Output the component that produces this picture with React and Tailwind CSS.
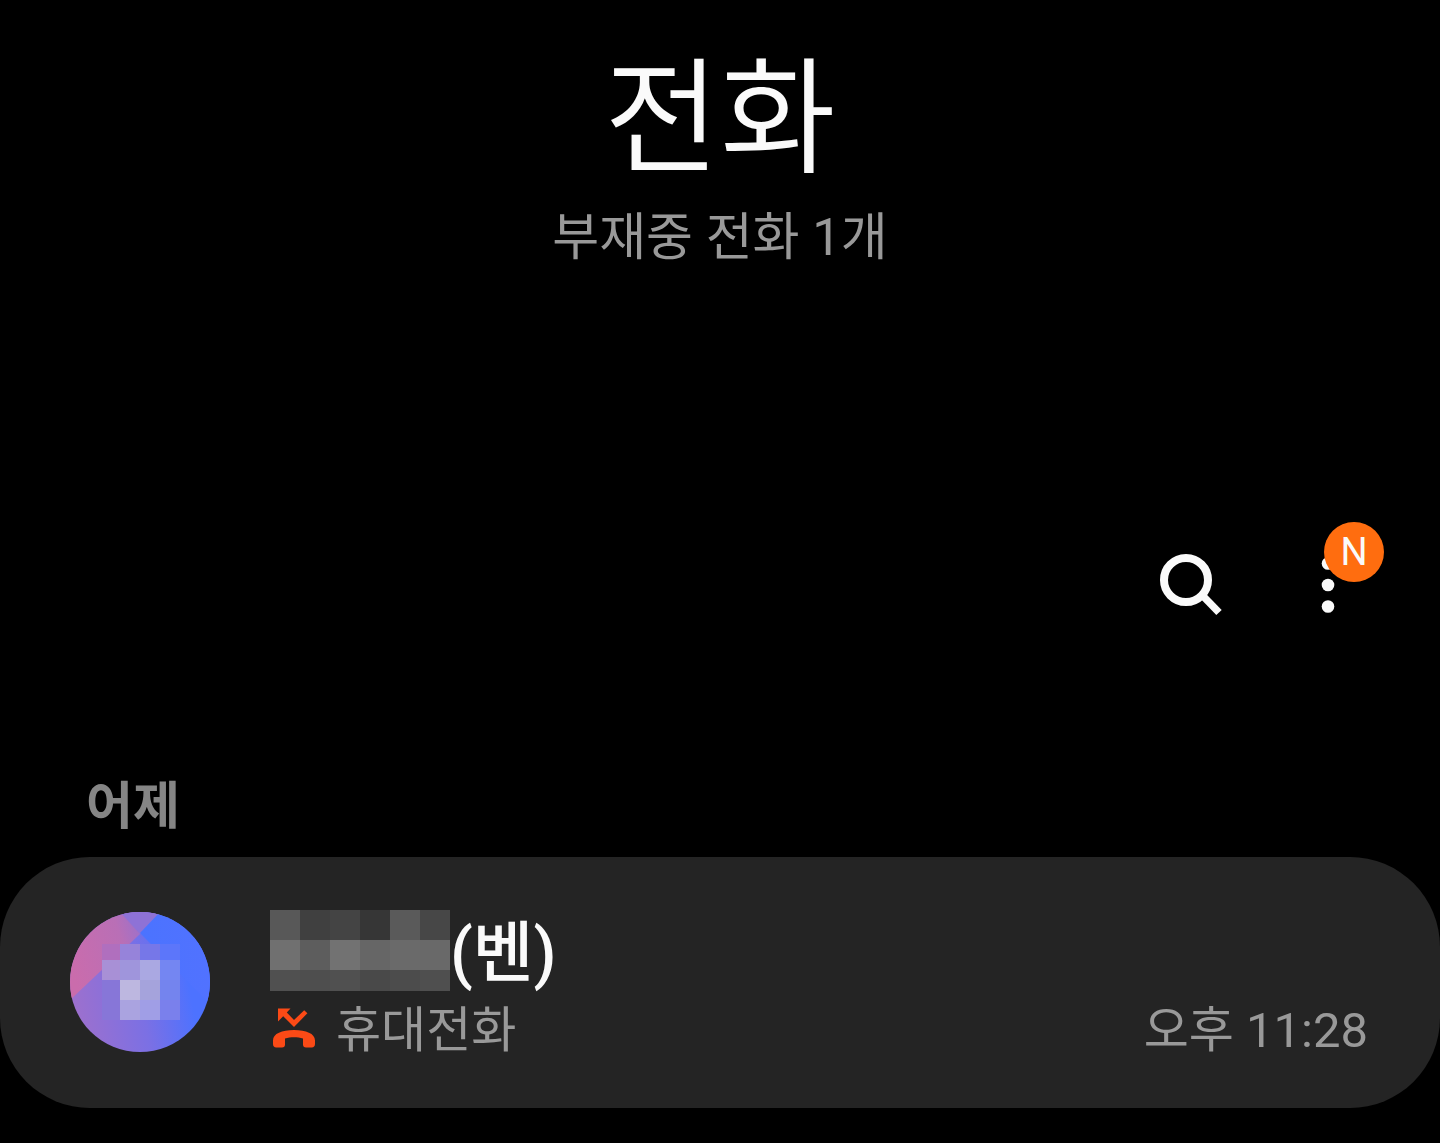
import { useState } from 'react'

const calls = [
  { id: 1, name: '(벤)', kind: '휴대전화', time: '오후 11:28' },
]

// Grey blocks that cover the private part of the name, 30px each
const maskRows = [
  ['#585858', '#404040', '#444444', '#363636', '#5a5a5a', '#474747'],
  ['#707070', '#5d5d5d', '#727272', '#666666', '#6a6a6a', '#696969'],
  ['#505050', '#4e4e4e', '#505050', '#494949', '#4c4c4c', '#4f4f4f'],
]

function NameMask() {
  return (
    <svg width="180" height="81" viewBox="0 0 180 81" className="shrink-0" shapeRendering="crispEdges" aria-hidden="true">
      {maskRows.map(function(row, y) {
        return row.map(function(fill, x) {
          return <rect key={x + '-' + y} x={x * 30} y={y * 30} width="30" height="30" fill={fill} />
        })
      })}
    </svg>
  )
}

function SearchIcon() {
  return (
    <svg width="64" height="64" viewBox="0 0 64 64" fill="none" stroke="#fafafa" aria-hidden="true">
      <circle cx="26" cy="28" r="22" strokeWidth="8" />
      <path d="M42 43L59 60.5" strokeWidth="7.5" />
    </svg>
  )
}

function MoreIcon() {
  return (
    <svg width="64" height="64" viewBox="0 0 64 64" fill="#fafafa" aria-hidden="true">
      <circle cx="32" cy="11.5" r="6.3" />
      <circle cx="32" cy="33" r="6.3" />
      <circle cx="32" cy="54.5" r="6.3" />
    </svg>
  )
}

function MissedIcon() {
  return (
    <svg width="48" height="48" viewBox="0 1 48 48" className="mt-1 shrink-0" aria-hidden="true">
      <path d="M8 6.5H20.5L16.8 10.5L24 18L34.2 8.2L37.4 11.3L24 25L13.2 14.2L8 19.5Z" fill="#fb4a16" />
      <path d="M3 42V38.5C3 31.5 12 28 24 28S45 31.5 45 38.5V42C45 44.2 43.8 45.4 41.8 45.4H36C34 45.4 33 44.4 33 42.4V36.6C27.5 34.8 20.5 34.8 15 36.6V42.4C15 44.4 14 45.4 12 45.4H6.2C4.2 45.4 3 44.2 3 42Z" fill="#fb4a16" />
    </svg>
  )
}

function Avatar() {
  return (
    <svg width="140" height="140" viewBox="0 0 140 140" className="mt-0.5 shrink-0 rounded-full" aria-hidden="true">
      <defs>
        <linearGradient id="base" x1="0" y1="0.7" x2="1" y2="0.5">
          <stop offset="0" stopColor="#9f70cc" />
          <stop offset="0.5" stopColor="#7b70e4" />
          <stop offset="0.85" stopColor="#4d72ff" />
        </linearGradient>
        <linearGradient id="pink" x1="0" y1="0.6" x2="1" y2="0.3">
          <stop offset="0" stopColor="#ca6cac" />
          <stop offset="0.6" stopColor="#b96fb6" />
          <stop offset="1" stopColor="#8a72d8" />
        </linearGradient>
        <linearGradient id="blue" x1="0" y1="0" x2="1" y2="0">
          <stop offset="0" stopColor="#4b73ff" />
          <stop offset="1" stopColor="#5172ff" />
        </linearGradient>
      </defs>
      <rect width="140" height="140" fill="url(#base)" />
      <path d="M0 0H90L70 22L0 88Z" fill="url(#pink)" />
      <path d="M50 0H92L70 22Z" fill="#8e72d6" />
      <path d="M70 21L90 0H140V92Z" fill="url(#blue)" />
      <g shapeRendering="crispEdges">
        <rect x="32" y="32" width="18" height="16" fill="#b06fbe" />
        <rect x="50" y="32" width="20" height="16" fill="#9683da" />
        <rect x="70" y="32" width="20" height="16" fill="#7677e8" />
        <rect x="90" y="32" width="20" height="16" fill="#5c76fa" />
        <rect x="32" y="48" width="18" height="20" fill="#a890d6" />
        <rect x="50" y="48" width="20" height="20" fill="#9f95dc" />
        <rect x="70" y="48" width="20" height="20" fill="#aaa8e2" />
        <rect x="90" y="48" width="20" height="20" fill="#7486f2" />
        <rect x="32" y="68" width="18" height="40" fill="#8776d8" />
        <rect x="50" y="68" width="20" height="20" fill="#bdb7e0" />
        <rect x="70" y="68" width="20" height="20" fill="#a5a3dc" />
        <rect x="90" y="68" width="20" height="20" fill="#7484ee" />
        <rect x="50" y="88" width="20" height="20" fill="#aaa3e0" />
        <rect x="70" y="88" width="20" height="20" fill="#a09ee6" />
        <rect x="90" y="88" width="20" height="20" fill="#7a80ec" />
      </g>
    </svg>
  )
}

export default function App() {
  const [activeCall, setActiveCall] = useState(null)

  return (
    <div className="min-h-screen bg-black font-[Roboto,'Noto_Sans_CJK_KR',sans-serif] text-[#fafafa]">
      {/* Header */}
      <header className="pt-10 text-center">
        <h1 className="text-[126px] leading-[160px] font-[350]">전화</h1>
        <p className="mt-1 text-[51px] leading-[68px] text-[#999999]">부재중 전화 1개</p>
      </header>

      {/* Toolbar */}
      <div className="mt-[264px] flex justify-end gap-10 pr-16">
        <button type="button" aria-label="검색" className="flex size-24 items-center justify-center">
          <SearchIcon />
        </button>
        <button type="button" aria-label="더보기" className="relative flex size-24 items-center justify-center">
          <MoreIcon />
          <span className="absolute -top-3.5 -right-2 flex size-[60px] items-center justify-center rounded-full bg-[#ff6d0f] text-[38px] leading-[40px]">N</span>
        </button>
      </div>

      {/* Call list */}
      <section className="mt-[141px]">
        <h2 className="pl-[86px] text-[51px] leading-[68px] font-bold text-[#858585]">어제</h2>
        <ul className="mt-4">
          {calls.map(function(call) {
            return (
              <li key={call.id}>
                <button
                  type="button"
                  onClick={function() { setActiveCall(call.id) }}
                  aria-pressed={activeCall === call.id}
                  className="flex w-full items-start rounded-[90px] bg-[#242424] pt-[53px] pr-[72px] pb-[45px] pl-[70px] text-left"
                >
                  <Avatar />
                  <div className="ml-[60px] flex-1">
                    <div className="flex items-start">
                      <NameMask />
                      <span className="text-[66px] leading-[87px] font-medium">{call.name}</span>
                    </div>
                    <div className="mt-0.5 flex items-start text-[49px] leading-[64px] text-[#999999]">
                      <MissedIcon />
                      <span className="ml-[18px] flex-1">{call.kind}</span>
                      <time>{call.time}</time>
                    </div>
                  </div>
                </button>
              </li>
            )
          })}
        </ul>
      </section>
    </div>
  )
}
